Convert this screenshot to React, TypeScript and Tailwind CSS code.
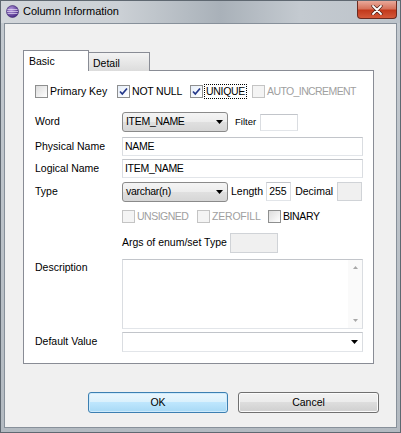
import React from "react";

function Check({ checked = false, disabled = false }: { checked?: boolean; disabled?: boolean }) {
  return (
    <div
      className={
        "w-[13px] h-[13px] shrink-0 border flex items-center justify-center " +
        (disabled
          ? "border-[#c4c4c4] bg-[#f4f4f4]"
          : checked
          ? "border-[#8e8f8f] bg-[linear-gradient(135deg,#e6eef9,#ffffff)]"
          : "border-[#8e8f8f] bg-[linear-gradient(135deg,#dcdcdc,#ffffff)]")
      }
    >
      {checked && (
        <svg width="11" height="11" viewBox="0 0 11 11">
          <path d="M2 5.5 L4.3 8 L9 2.5" fill="none" stroke="#24388a" strokeWidth="1.7" />
        </svg>
      )}
    </div>
  );
}

function Arrow({ color = "#000" }: { color?: string }) {
  return (
    <svg width="7" height="4" viewBox="0 0 7 4" className="shrink-0">
      <polygon points="0,0 7,0 3.5,4" fill={color} />
    </svg>
  );
}

function Combo({ text, w }: { text: string; w: string }) {
  return (
    <div
      className={
        w +
        " h-[20px] shrink-0 flex items-center rounded-[3px] border border-[#8a8a8a] bg-[linear-gradient(#f4f4f4_0%,#ececec_50%,#e0e0e0_50%,#d6d6d6_100%)] pl-[3px] pr-[4px]"
      }
    >
      <span className="flex-1 tracking-[-0.3px]">{text}</span>
      <Arrow />
    </div>
  );
}

const tb = "border border-t-[#c2c5ca] border-x-[#dadde1] border-b-[#e2e5e9] bg-white";
const tbDis = "border border-[#d0d3d7] bg-[#f0f0f0]";

export default function App() {
  return (
    <div className="w-[401px] h-[433px] border border-[#5f6871] bg-[linear-gradient(180deg,#c4cad0,#b3bac1)] flex flex-col font-['Liberation_Sans',Arial,sans-serif] text-[10.5px] text-black overflow-hidden">
      {/* Title bar */}
      <div className="h-[22px] shrink-0 flex items-start bg-[linear-gradient(90deg,#d3d7db_0%,#cbd0d5_30%,#a9b1b9_55%,#c4cad0_75%,#bcc3ca_100%)]">
        <div className="flex items-center h-[20px] pl-[5px] gap-[4px] flex-1">
          <svg width="13" height="13" viewBox="0 0 13 13">
            <defs>
              <radialGradient id="g" cx="40%" cy="35%" r="65%">
                <stop offset="0%" stopColor="#b79be0" />
                <stop offset="100%" stopColor="#4a2c86" />
              </radialGradient>
            </defs>
            <circle cx="6.5" cy="6.5" r="6" fill="url(#g)" stroke="#3c2570" strokeWidth="0.6" />
            <path d="M1.5 4.5 H11.5 M1 6.5 H12 M1.5 8.5 H11.5" stroke="#e6dcf5" strokeWidth="0.7" />
          </svg>
          <span className="text-[11px]">Column Information</span>
        </div>
        <div className="w-[40px] h-[18px] mr-[3px] rounded-b-[4px] border border-t-0 border-[#6a2a20] bg-[linear-gradient(#e9a99a_0%,#d6735c_45%,#c2391c_55%,#d4593a_100%)] flex items-center justify-center">
          <svg width="12" height="10" viewBox="0 0 12 10">
            <path d="M2 1 L10 9 M10 1 L2 9" stroke="#4a2018" strokeWidth="3.2" strokeLinecap="round" />
            <path d="M2 1 L10 9 M10 1 L2 9" stroke="#ffffff" strokeWidth="1.8" strokeLinecap="round" />
          </svg>
        </div>
      </div>

      {/* Client area */}
      <div className="flex-1 ml-[3px] mr-[3px] mb-[4px] border border-[#87909a] bg-[#f0f0f0] pl-[18px] pt-[26px]">
        {/* Tabs */}
        <div className="flex items-end h-[21px] -mb-px relative z-10">
          <div className="w-[66px] h-[21px] border border-b-0 border-[#898c95] bg-white pl-[5px] pt-[3px]">Basic</div>
          <div className="w-[62px] h-[19px] -ml-px border border-b-0 border-[#898c95] bg-[linear-gradient(#f3f3f3,#dcdcdc)] pl-[4px] pt-[3px]">Detail</div>
        </div>
        {/* Panel */}
        <div className="w-[351px] border border-[#898c95] bg-white pl-[11px] pb-[11px] flex flex-col">
          {/* Row 1 checkboxes */}
          <div className="flex items-center h-[15px] mt-[13px]">
            <div className="w-[82px] flex items-center gap-[2px]">
              <Check />
              <span>Primary Key</span>
            </div>
            <div className="w-[73px] flex items-center gap-[2px]">
              <Check checked />
              <span className="tracking-[-0.2px]">NOT NULL</span>
            </div>
            <div className="w-[62px] flex items-center gap-[0px]">
              <Check checked />
              <span className="border border-dotted border-black px-[1px] h-[15px] leading-[13px] ml-[1px] tracking-[-0.3px]">UNIQUE</span>
            </div>
            <div className="flex items-center gap-[2px]">
              <Check disabled />
              <span className="text-[#a0a0a0] tracking-[-0.6px]">AUTO_INCREMENT</span>
            </div>
          </div>

          {/* Word */}
          <div className="flex items-center h-[20px] mt-[13px]">
            <span className="w-[87px] shrink-0">Word</span>
            <Combo text="ITEM_NAME" w="w-[106px]" />
            <span className="ml-[7px] text-[9.5px]">Filter</span>
            <div className={tb + " ml-[4px] w-[38px] h-[17px]"} />
          </div>

          {/* Physical Name */}
          <div className="flex items-center h-[19px] mt-[5px]">
            <span className="w-[87px] shrink-0">Physical Name</span>
            <div className={tb + " w-[241px] h-[19px] flex items-center pl-[2px] tracking-[-0.3px]"}>NAME</div>
          </div>

          {/* Logical Name */}
          <div className="flex items-center h-[19px] mt-[3px]">
            <span className="w-[87px] shrink-0">Logical Name</span>
            <div className={tb + " w-[241px] h-[19px] flex items-center pl-[2px] tracking-[-0.3px]"}>ITEM_NAME</div>
          </div>

          {/* Type */}
          <div className="flex items-center h-[19px] mt-[4px]">
            <span className="w-[87px] shrink-0">Type</span>
            <Combo text="varchar(n)" w="w-[106px]" />
            <span className="ml-[3px]">Length</span>
            <div className={tb + " ml-[3px] w-[25px] h-[19px] flex items-center pl-[2px]"}>255</div>
            <span className="ml-[4px]">Decimal</span>
            <div className={tbDis + " ml-[4px] w-[25px] h-[19px]"} />
          </div>

          {/* Row 2 checkboxes */}
          <div className="flex items-center h-[13px] mt-[9px] pl-[87px]">
            <div className="w-[75px] flex items-center gap-[2px]">
              <Check disabled />
              <span className="text-[#a0a0a0] tracking-[-0.5px]">UNSIGNED</span>
            </div>
            <div className="w-[71px] flex items-center gap-[2px]">
              <Check disabled />
              <span className="text-[#a0a0a0] tracking-[-0.2px]">ZEROFILL</span>
            </div>
            <div className="flex items-center gap-[2px]">
              <Check />
              <span className="tracking-[-0.4px]">BINARY</span>
            </div>
          </div>

          {/* Args */}
          <div className="flex items-center h-[20px] mt-[10px] pl-[87px]">
            <span>Args of enum/set Type</span>
            <div className={tbDis + " ml-[3px] w-[48px] h-[20px]"} />
          </div>

          {/* Description */}
          <div className="flex items-start h-[70px] mt-[6px]">
            <span className="w-[87px] shrink-0 pt-[1px]">Description</span>
            <div className={tb + " w-[241px] h-[70px] flex justify-end"}>
              <div className="w-[14px] h-full bg-[#fafafa] flex flex-col items-center justify-between py-[6px]">
                <svg width="5" height="3" viewBox="0 0 5 3">
                  <polygon points="0,3 5,3 2.5,0" fill="#a8a8a8" />
                </svg>
                <svg width="5" height="3" viewBox="0 0 5 3">
                  <polygon points="0,0 5,0 2.5,3" fill="#a8a8a8" />
                </svg>
              </div>
            </div>
          </div>

          {/* Default Value */}
          <div className="flex items-center h-[20px] mt-[3px]">
            <span className="w-[87px] shrink-0">Default Value</span>
            <div className={tb + " w-[241px] h-[20px] flex items-center justify-end pr-[4px]"}>
              <Arrow />
            </div>
          </div>
        </div>

        {/* Buttons */}
        <div className="flex mt-[28px] ml-[65px] gap-[10px]">
          <div className="w-[140px] h-[21px] rounded-[3px] border border-[#3c7fb1] bg-[linear-gradient(#eaf6fd_0%,#d9f0fc_50%,#bee6fd_50%,#a7d9f5_100%)] shadow-[inset_0_0_0_1px_#cdeafc] flex items-center justify-center">
            OK
          </div>
          <div className="w-[141px] h-[21px] rounded-[3px] border border-[#707070] bg-[linear-gradient(#f2f2f2_0%,#ebebeb_50%,#dddddd_50%,#cfcfcf_100%)] shadow-[inset_0_0_0_1px_#fbfbfb] flex items-center justify-center">
            Cancel
          </div>
        </div>
      </div>
    </div>
  );
}
